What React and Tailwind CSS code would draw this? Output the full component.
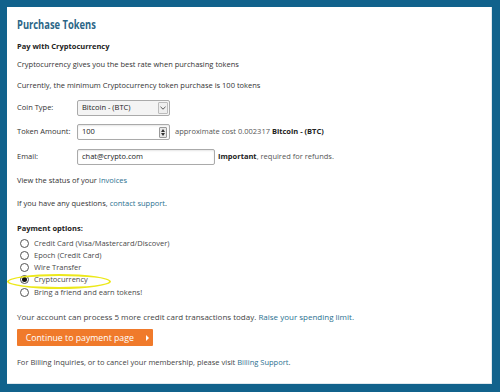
// Purchase Tokens — crypto payment form

const font = { fontFamily: '"Open Sans", "Liberation Sans", sans-serif' };

function Radio({ checked, children }) {
    return (
        <div className="flex items-center h-[12.25px]">
            <span className="ml-[3px] w-[9px] h-[9px] rounded-full border border-[#555] bg-white flex items-center justify-center">
                {checked && <span className="w-[5px] h-[5px] rounded-full bg-[#111]" />}
            </span>
            <span className="ml-[5px] text-[#4a4a4a]">{children}</span>
        </div>
    );
}

function Row({ label, children }) {
    return (
        <div className="flex items-center h-[16px]">
            <span className="w-[60px] text-[#333]">{label}</span>
            {children}
        </div>
    );
}

export default function App() {
    return (
        <div className="w-[500px] h-[392px] bg-[#11628c] pt-[7px] pl-[7px] pr-[8px] pb-[8px]" style={font}>
            <div className="relative h-full bg-white border-r border-b border-[#dfe8ee] pl-[10px] pt-[7px] text-[7.5px] text-[#333]">

                {/* title face in the shot is narrow, so squeeze it a little */}
                <h1 className="h-[20px] leading-[20px] text-[13px] font-bold text-[#2b6687] origin-left scale-x-[0.72]">
                    Purchase Tokens
                </h1>

                <p className="mt-[6px] leading-[12px] font-bold text-[#222]">Pay with Cryptocurrency</p>
                <p className="mt-[6px] leading-[12px]">Cryptocurrency gives you the best rate when purchasing tokens</p>
                <p className="mt-[9px] leading-[12px]">Currently, the minimum Cryptocurrency token purchase is 100 tokens</p>

                {/* ── Form rows ─────────────────────────────── */}
                <div className="mt-[9px]">
                    <Row label="Coin Type:">
                        <div className="w-[93px] h-[16px] border border-[#aaa] rounded-[2px] bg-[#f4f4f4] flex items-center">
                            <span className="flex-1 pl-[4px] text-[#222]">Bitcoin - (BTC)</span>
                            <span className="w-[10px] h-[12px] mr-[1px] border border-[#bbb] rounded-[1px] bg-[#eee] flex items-center justify-center">
                                <svg width="6" height="4" viewBox="0 0 6 4" fill="none" stroke="#555" strokeWidth="1">
                                    <polyline points="0.5 0.8 3 3.2 5.5 0.8" />
                                </svg>
                            </span>
                        </div>
                    </Row>
                </div>

                <div className="mt-[8px]">
                    <Row label="Token Amount:">
                        <div className="w-[93px] h-[16px] border border-[#aaa] rounded-[2px] bg-white flex items-center shadow-[inset_0_1px_2px_rgba(0,0,0,0.1)]">
                            <span className="flex-1 pl-[4px] text-[#222]">100</span>
                            <span className="w-[8px] h-[11px] mr-[2px] border border-[#999] rounded-[1px] bg-[#e8e8e8] flex flex-col items-center justify-center gap-[1px]">
                                <span className="w-0 h-0 border-l-[2px] border-r-[2px] border-b-[3px] border-l-transparent border-r-transparent border-b-[#333]" />
                                <span className="w-0 h-0 border-l-[2px] border-r-[2px] border-t-[3px] border-l-transparent border-r-transparent border-t-[#333]" />
                            </span>
                        </div>
                        <span className="ml-[5px] text-[#555]">
                            approximate cost 0.002317 <b className="text-[#222]">Bitcoin - (BTC)</b>
                        </span>
                    </Row>
                </div>

                <div className="mt-[9px]">
                    <Row label="Email:">
                        <div className="w-[138px] h-[16px] border border-[#aaa] rounded-[2px] bg-white flex items-center shadow-[inset_0_1px_2px_rgba(0,0,0,0.1)]">
                            <span className="pl-[4px] text-[#222]">chat@crypto.com</span>
                        </div>
                        <span className="ml-[3px] text-[#555]">
                            <b className="text-[#222]">Important</b>, required for refunds.
                        </span>
                    </Row>
                </div>

                <p className="mt-[9px] leading-[12px]">
                    View the status of your <span className="text-[#2a7090]">Invoices</span>
                </p>
                <p className="mt-[11px] leading-[12px]">
                    If you have any questions, <span className="text-[#2a7090]">contact support</span>.
                </p>

                {/* ── Payment options ───────────────────────── */}
                <p className="mt-[13px] leading-[12px] font-bold text-[#222]">Payment options:</p>
                <div className="mt-[3px]">
                    <Radio>Credit Card (Visa/Mastercard/Discover)</Radio>
                    <Radio>Epoch (Credit Card)</Radio>
                    <Radio>Wire Transfer</Radio>
                    <Radio checked>Cryptocurrency</Radio>
                    <Radio>Bring a friend and earn tokens!</Radio>
                </div>

                {/* highlight drawn over the selected option */}
                <div className="absolute left-[0px] top-[267px] w-[104px] h-[15px] rounded-[50%] border-[2.5px] border-[#ece81a]" />

                <p className="mt-[13px] leading-[12px] text-[8px] text-[#444]">
                    Your account can process 5 more credit card transactions today.{' '}
                    <span className="text-[#2a7090]">Raise your spending limit.</span>
                </p>

                <button className="mt-[6px] w-[136px] h-[17px] bg-[#f07a2b] rounded-[1px] text-white text-[9.5px] font-medium flex items-center justify-center gap-[7px]">
                    <span className="origin-center scale-x-[0.92]">Continue to payment page</span>
                    <span className="w-0 h-0 border-t-[3px] border-b-[3px] border-l-[3px] border-t-transparent border-b-transparent border-l-white" />
                </button>

                <p className="mt-[10px] leading-[12px] text-[7.5px] text-[#444]">
                    For Billing Inquiries, or to cancel your membership, please visit{' '}
                    <span className="text-[#2a7090]">Billing Support</span>.
                </p>
            </div>
        </div>
    );
}
